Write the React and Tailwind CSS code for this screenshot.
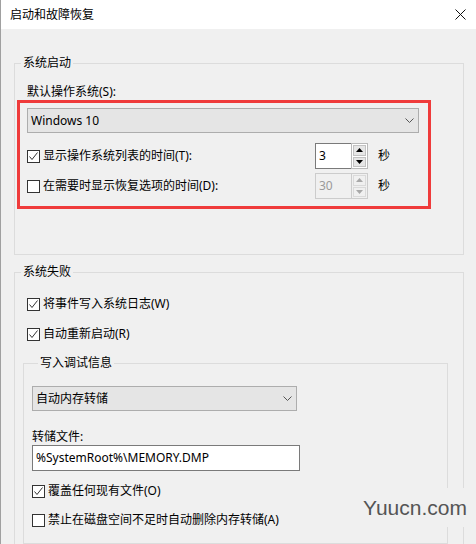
import React from 'react'

const font = "font-['Noto_Sans','Noto_Sans_CJK_SC',sans-serif]"

function CheckBox({ checked }) {
  return (
    <span className="flex h-[13px] w-[13px] shrink-0 items-center justify-center border border-[#333333] bg-white">
      {checked && (
        <svg width="11" height="11" viewBox="0 0 11 11" fill="none">
          <path d="M1.5 5.5 L4 8.5 L9.5 1.5" stroke="#333333" strokeWidth="1" />
        </svg>
      )}
    </span>
  )
}

function CheckRow({ checked, label, className = '' }) {
  return (
    <div className={`flex items-center gap-[3px] ${className}`}>
      <CheckBox checked={checked} />
      <span className="whitespace-nowrap">{label}</span>
    </div>
  )
}

function Chevron() {
  return (
    <svg width="9" height="5" viewBox="0 0 9 5" fill="none">
      <path d="M0.5 0.5 L4.5 4.5 L8.5 0.5" stroke="#555555" strokeWidth="1" />
    </svg>
  )
}

function ComboBox({ value, width }) {
  return (
    <div
      className="flex h-[25px] items-center justify-between border border-[#adadad] bg-[#e5e5e5] pl-[3px] pr-[4px]"
      style={{ width }}
    >
      <span>{value}</span>
      <Chevron />
    </div>
  )
}

function Arrow({ up, color }) {
  return (
    <svg width="7" height="4" viewBox="0 0 7 4">
      <path d={up ? 'M0 4 L3.5 0 L7 4 Z' : 'M0 0 L3.5 4 L7 0 Z'} fill={color} />
    </svg>
  )
}

function SpinBox({ value, disabled }) {
  const arrow = disabled ? '#a8a8a8' : '#000000'
  return (
    <div className="flex h-[26px] w-[53px]">
      <div
        className={`flex w-[36px] items-center border-y border-l pl-[3px] ${
          disabled ? 'border-[#cccccc] bg-[#f0f0f0] text-[#9a9a9a]' : 'border-[#7a7a7a] bg-white'
        }`}
      >
        {value}
      </div>
      <div
        className={`flex w-[17px] flex-col gap-px border p-px ${
          disabled ? 'border-[#cccccc] bg-[#f0f0f0]' : 'border-[#b9b9b9] bg-white'
        }`}
      >
        <div
          className={`flex flex-1 items-center justify-center border ${
            disabled ? 'border-[#dadada] bg-[#f0f0f0]' : 'border-[#c2c2c2] bg-[#e6e6e6]'
          }`}
        >
          <Arrow up color={arrow} />
        </div>
        <div
          className={`flex flex-1 items-center justify-center border ${
            disabled ? 'border-[#dadada] bg-[#f0f0f0]' : 'border-[#c2c2c2] bg-[#e6e6e6]'
          }`}
        >
          <Arrow color={arrow} />
        </div>
      </div>
    </div>
  )
}

function TimeRow({ checked, label, value, disabled, className = '' }) {
  return (
    <div className={`flex h-[26px] items-center ${className}`}>
      <div className="w-[288px]">
        <CheckRow checked={checked} label={label} />
      </div>
      <SpinBox value={value} disabled={disabled} />
      <span className="ml-[10px]">秒</span>
    </div>
  )
}

export default function App() {
  return (
    <div
      className={`relative flex h-[544px] w-[476px] flex-col overflow-hidden border-l border-[#a0a0a0] bg-[#f0f0f0] text-[12px] leading-[16px] text-black ${font}`}
    >
      {/* Title bar */}
      <div className="flex h-[29px] shrink-0 items-center justify-between bg-white pl-[9px] pr-[10px]">
        <span>启动和故障恢复</span>
        <svg width="11" height="11" viewBox="0 0 11 11" fill="none">
          <path d="M0.5 0.5 L10.5 10.5 M10.5 0.5 L0.5 10.5" stroke="#111111" strokeWidth="1" />
        </svg>
      </div>

      {/* 系统启动 */}
      <fieldset className="ml-[13px] mt-[26px] w-[450px] shrink-0 border border-[#dcdcdc] pb-[45px] pt-[13px]">
        <legend className="ml-[6px] px-[2px]">系统启动</legend>
        <div className="pl-[12px]">默认操作系统(S):</div>
        <div className="ml-[2px] w-[414px] border-[3px] border-[#ef3b3b] pb-[7px] pl-[7px] pt-[5px]">
          <ComboBox value="Windows 10" width={392} />
          <TimeRow className="mt-[10px]" checked label="显示操作系统列表的时间(T):" value="3" />
          <TimeRow className="mt-[4px]" label="在需要时显示恢复选项的时间(D):" value="30" disabled />
        </div>
      </fieldset>

      {/* 系统失败 */}
      <fieldset className="ml-[13px] mt-[9px] w-[450px] shrink-0 border border-[#dcdcdc] pb-[30px] pt-[16px]">
        <legend className="ml-[6px] px-[2px]">系统失败</legend>
        <CheckRow className="ml-[12px]" checked label="将事件写入系统日志(W)" />
        <CheckRow className="ml-[12px] mt-[14px]" checked label="自动重新启动(R)" />

        <fieldset className="ml-[8px] mt-[13px] w-[425px] border border-[#dcdcdc] pb-[15px] pl-[8px] pt-[15px]">
          <legend className="ml-[6px] px-[2px]">写入调试信息</legend>
          <ComboBox value="自动内存转储" width={265} />
          <div className="mt-[18px]">转储文件:</div>
          <div className="flex h-[26px] w-[268px] items-center border border-[#7a7a7a] bg-white pl-[3px]">
            %SystemRoot%\MEMORY.DMP
          </div>
          <CheckRow className="mt-[12px]" checked label="覆盖任何现有文件(O)" />
          <CheckRow className="mt-[13px]" label="禁止在磁盘空间不足时自动删除内存转储(A)" />
        </fieldset>
      </fieldset>

      {/* site mark */}
      <div className="absolute left-[363px] top-[488px] flex h-[39px] w-[102px] items-center justify-center bg-[#f0f0f0] font-['Liberation_Sans',sans-serif] text-[21px] leading-none text-[#555555]">
        Yuucn.com
      </div>
    </div>
  )
}
